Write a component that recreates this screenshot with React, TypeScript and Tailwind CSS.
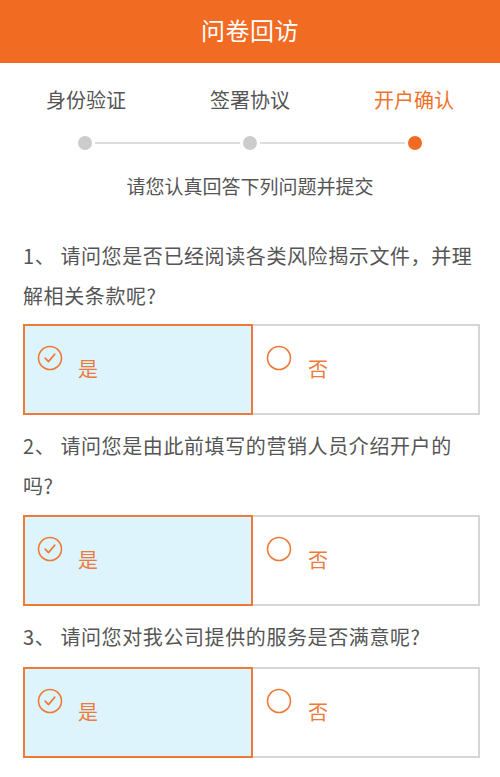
import React from "react";

const font = { fontFamily: '"Noto Sans CJK SC", "Noto Sans", sans-serif' };

const CheckCircle = () => (
  <svg width="26" height="26" viewBox="0 0 26 26" fill="none">
    <circle cx="13" cy="13" r="11.5" stroke="#ee7a3a" strokeWidth="1.6" />
    <path d="M8.2 13.2l3.3 3.4 6.2-7.4" stroke="#ee7a3a" strokeWidth="1.7" strokeLinecap="round" strokeLinejoin="round" />
  </svg>
);

const EmptyCircle = () => (
  <svg width="26" height="26" viewBox="0 0 26 26" fill="none">
    <circle cx="13" cy="13" r="11.5" stroke="#ee7a3a" strokeWidth="1.6" />
  </svg>
);

const AnswerBox: React.FC = () => (
  <div className="ml-[23px] mr-[20px] flex h-[91px]">
    <div className="relative w-[230px] border-2 border-[#ee7a3a] bg-[#ddf4fc]">
      <div className="absolute left-[12px] top-[19px]">
        <CheckCircle />
      </div>
      <span className="absolute left-[53px] top-[30px] text-[20px] leading-[26px] text-[#ee7a3a]">是</span>
    </div>
    <div className="relative flex-1 border-y-2 border-r-2 border-[#d6d6d6] bg-white">
      <div className="absolute left-[13px] top-[19px]">
        <EmptyCircle />
      </div>
      <span className="absolute left-[55px] top-[30px] text-[20px] leading-[26px] text-[#ee7a3a]">否</span>
    </div>
  </div>
);

const Question: React.FC<{ children: React.ReactNode; className?: string }> = ({ children, className }) => (
  <p className={`ml-[23px] mr-[10px] text-[20px] leading-[40px] tracking-[0.6px] text-[#555555] ${className ?? ""}`}>
    {children}
  </p>
);

export default function App() {
  return (
    <div className="w-[500px] min-h-[777px] bg-white" style={font}>
      <div className="flex h-[63px] items-center justify-center bg-[#f26b22] pb-[4px]">
        <h1 className="text-[24px] font-normal tracking-[0.5px] text-white">问卷回访</h1>
      </div>

      <div className="mt-[23px] grid grid-cols-3 px-[4px] text-[20px] leading-[28px]">
        <span className="text-center text-[#555555]">身份验证</span>
        <span className="text-center text-[#555555]">签署协议</span>
        <span className="text-center text-[#f0712a]">开户确认</span>
      </div>

      <div className="mx-[78px] mt-[22px] flex items-center">
        <div className="h-[14px] w-[14px] rounded-full bg-[#cccccc]" />
        <div className="mx-[3px] h-[2px] flex-1 bg-[#dddddd]" />
        <div className="h-[14px] w-[14px] rounded-full bg-[#cccccc]" />
        <div className="mx-[3px] h-[2px] flex-1 bg-[#dddddd]" />
        <div className="h-[14px] w-[14px] rounded-full bg-[#f26b22]" />
      </div>

      <p className="mt-[23px] text-center text-[19px] leading-[26px] text-[#555555]">请您认真回答下列问题并提交</p>

      <Question className="mt-[37px]">
        1、 请问您是否已经阅读各类风险揭示文件，并理
        <br />
        解相关条款呢?
      </Question>
      <div className="mt-[8px]">
        <AnswerBox />
      </div>

      <Question className="mt-[11px]">
        2、 请问您是由此前填写的营销人员介绍开户的
        <br />
        吗?
      </Question>
      <div className="mt-[9px]">
        <AnswerBox />
      </div>

      <Question className="mt-[11px]">3、 请问您对我公司提供的服务是否满意呢?</Question>
      <div className="mt-[10px]">
        <AnswerBox />
      </div>
    </div>
  );
}
